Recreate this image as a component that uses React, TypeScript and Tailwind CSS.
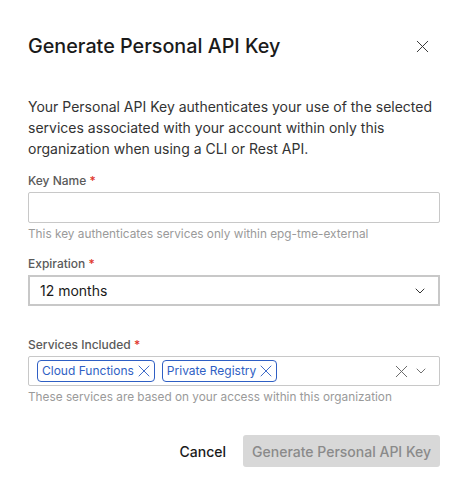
import { X, ChevronDown } from "lucide-react";

function Label({ children }: { children: React.ReactNode }) {
  return (
    <div className="text-[12px] leading-[16px] font-medium text-[#5a5a5a] mb-[3px]">
      {children} <span className="text-[#e0352b]">*</span>
    </div>
  );
}

function Chip({ label }: { label: string }) {
  return (
    <span className="flex items-center h-[22px] pl-[4px] border border-[#2f5fc4] rounded-[4px] text-[12px] text-[#2f5fc4]">
      {label}
      <X size={20} strokeWidth={1.1} />
    </span>
  );
}

export default function App() {
  return (
    <div
      className="w-[470px] h-[499px] bg-white pl-[28px] pr-[30px] pt-[32px]"
      style={{ fontFamily: "Inter, 'Noto Sans', sans-serif" }}
    >
      <div className="flex items-center justify-between">
        <h1 className="text-[19.75px] leading-[28px] font-medium text-[#1a1a1a]">
          Generate Personal API Key
        </h1>
        <X size={21} strokeWidth={1.1} className="text-[#333] mr-[7px]" />
      </div>

      <p className="mt-[36px] text-[14px] leading-[21px] text-[#333]">
        Your Personal API Key authenticates your use of the selected services associated with your
        account within only this organization when using a CLI or Rest API.
      </p>

      <div className="mt-[14px]">
        <Label>Key Name</Label>
        <div className="h-[31px] border border-[#c8c8c8] rounded-[2px]" />
        <div className="mt-[3px] text-[11.8px] leading-[16px] text-[#9a9a9a]">
          This key authenticates services only within epg-tme-external
        </div>
      </div>

      <div className="mt-[14px]">
        <Label>Expiration</Label>
        <div className="h-[31px] border-2 border-[#c8c8c8] flex items-center justify-between pl-[10px] pr-[10px]">
          <span className="text-[14px] text-[#1a1a1a]">12 months</span>
          <ChevronDown size={16} strokeWidth={1.5} className="text-[#333]" />
        </div>
      </div>

      <div className="mt-[31px]">
        <Label>Services Included</Label>
        <div className="h-[30px] border border-[#c8c8c8] rounded-[2px] flex items-center pl-[8px] pr-[10px]">
          <div className="flex gap-[7px]">
            <Chip label="Cloud Functions" />
            <Chip label="Private Registry" />
          </div>
          <div className="ml-auto flex items-center gap-[1px] text-[#666]">
            <X size={21} strokeWidth={1.1} />
            <ChevronDown size={16} strokeWidth={1.4} />
          </div>
        </div>
        <div className="mt-[3px] text-[11.8px] leading-[16px] text-[#9a9a9a]">
          These services are based on your access within this organization
        </div>
      </div>

      <div className="mt-[30px] flex justify-end items-center gap-[17px]">
        <button className="text-[14px] font-medium text-[#1a1a1a]">Cancel</button>
        <button className="h-[32px] px-[9px] rounded-[3px] bg-[#d8d8d8] text-[14px] font-medium text-[#8a8a8a]">
          Generate Personal API Key
        </button>
      </div>
    </div>
  );
}
